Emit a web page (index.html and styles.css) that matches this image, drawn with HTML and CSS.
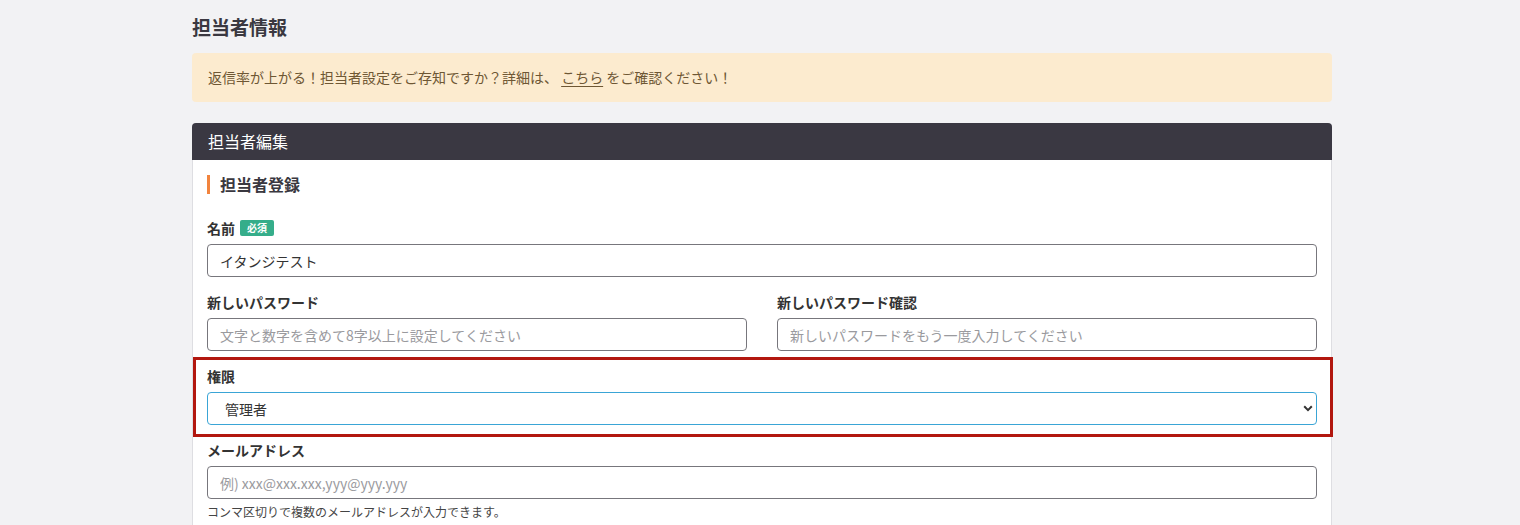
FILE: index.html
```html
<!DOCTYPE html>
<html lang="ja">
<head>
<meta charset="utf-8">
<link rel="stylesheet" href="styles.css">
</head>
<body>
<div class="page">
  <h1 class="page-title">担当者情報</h1>
  <div class="alert">返信率が上がる！担当者設定をご存知ですか？詳細は、 <a href="#" class="alert-link">こちら</a> をご確認ください！</div>
  <section class="card">
    <div class="card-header">担当者編集</div>
    <div class="card-body">
      <h2 class="section-title">担当者登録</h2>
      <div class="form">
        <div class="field">
          <label class="label">名前<span class="badge">必須</span></label>
          <input class="input" type="text" value="イタンジテスト">
        </div>
        <div class="row">
          <div class="field">
            <label class="label">新しいパスワード</label>
            <input class="input" type="password" placeholder="文字と数字を含めて8字以上に設定してください">
          </div>
          <div class="field">
            <label class="label">新しいパスワード確認</label>
            <input class="input" type="password" placeholder="新しいパスワードをもう一度入力してください">
          </div>
        </div>
        <div class="field highlighted">
          <label class="label">権限</label>
          <div class="select-wrap">
            <select class="select">
              <option>管理者</option>
            </select>
            <svg class="chevron" width="10" height="7" viewBox="0 0 10 7"><path d="M1.2 1.3 L5 5.1 L8.8 1.3" fill="none" stroke="#333" stroke-width="2"/></svg>
          </div>
        </div>
        <div class="field">
          <label class="label">メールアドレス</label>
          <input class="input" type="text" placeholder="例) xxx@xxx.xxx,yyy@yyy.yyy">
          <p class="help">コンマ区切りで複数のメールアドレスが入力できます。</p>
        </div>
      </div>
    </div>
  </section>
</div>
</body>
</html>
```

FILE: styles.css
```css
* { box-sizing: border-box; }
html, body {
  margin: 0;
  padding: 0;
  background: #f2f2f4;
  font-family: "Noto Sans CJK JP", "Noto Sans", sans-serif;
  color: #333;
}
.page {
  width: 1140px;
  margin-left: 192px;
  padding-top: 14px;
}
.page-title {
  margin: 0;
  font-size: 19px;
  line-height: 26px;
  font-weight: 700;
  color: #3a3840;
}
.alert {
  margin-top: 13px;
  background: #fcebcf;
  border-radius: 4px;
  padding: 15px 16px;
  font-size: 14px;
  line-height: 19px;
  color: #6e5734;
}
.alert-link {
  color: #6e5734;
  text-decoration: underline;
  text-underline-offset: 3px;
}
.card {
  margin-top: 21px;
  background: #fff;
  border: 1px solid #dedee2;
  border-radius: 4px;
}
.card-header {
  margin: -1px -1px 0;
  height: 37px;
  background: #3a3842;
  border-radius: 4px 4px 0 0;
  color: #fff;
  font-size: 16px;
  line-height: 37px;
  padding-left: 16px;
}
.card-body {
  padding: 15px 14px 30px 14px;
}
.section-title {
  margin: 0;
  font-size: 16px;
  line-height: 19px;
  font-weight: 700;
  color: #3a3840;
  border-left: 3px solid #f2843e;
  padding-left: 10px;
}
.form {
  margin-top: 25px;
  display: flex;
  flex-direction: column;
  gap: 16px;
}
.row {
  display: grid;
  grid-template-columns: 1fr 1fr;
  gap: 30px;
}
.field {
  display: flex;
  flex-direction: column;
}
.label {
  display: flex;
  align-items: center;
  font-size: 14px;
  line-height: 18px;
  height: 18px;
  font-weight: 700;
  color: #333;
  margin-bottom: 7px;
}
.badge {
  margin-left: 5px;
  background: #35ad8a;
  color: #fff;
  font-size: 10px;
  line-height: 16px;
  height: 16px;
  padding: 0 7px;
  border-radius: 2px;
  font-weight: 700;
}
.input, .select {
  width: 100%;
  height: 33px;
  border: 1px solid #77767c;
  border-radius: 4px;
  padding: 0 12px;
  font-family: "Noto Sans CJK JP", "Noto Sans", sans-serif;
  font-size: 14px;
  color: #333;
  background: #fff;
  outline: none;
}
.input::placeholder {
  color: #9a9a9e;
}
.highlighted {
  position: relative;
}
.highlighted::before {
  content: "";
  position: absolute;
  top: -10px;
  left: -14px;
  right: -16px;
  bottom: -12px;
  border: 3px solid #b2170f;
  pointer-events: none;
}
.select-wrap {
  position: relative;
}
.select {
  appearance: none;
  -webkit-appearance: none;
  border-color: #3aa5d6;
  padding-left: 17px;
}
.chevron {
  position: absolute;
  right: 4px;
  top: 13px;
}
.help {
  margin: 5px 0 0;
  font-size: 12px;
  line-height: 16px;
  color: #444;
}
```
